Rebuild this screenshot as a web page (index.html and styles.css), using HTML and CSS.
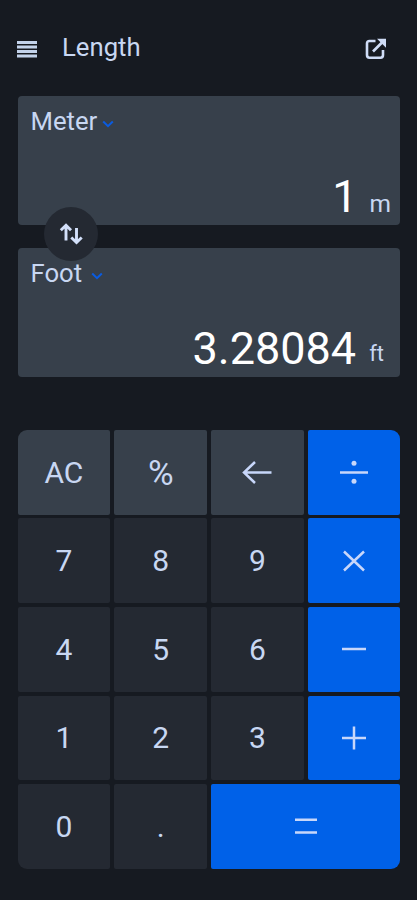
FILE: index.html
```html
<!DOCTYPE html>
<html lang="en">
<head>
  <meta charset="UTF-8">
  <meta name="viewport" content="width=device-width, initial-scale=1.0">
  <title>Length</title>
  <link rel="stylesheet" href="styles.css">
</head>
<body>
  <header class="topbar">
    <svg class="menu-icon" width="20" height="17" viewBox="0 0 20 17">
      <path d="M0 1.500H20M0 6H20M0 10.500H20M0 15H20" stroke="#c3d3eb" stroke-width="3"/>
    </svg>
    <h1>Length</h1>
    <svg class="open-icon" width="22" height="22" viewBox="0 0 22 22" fill="none" stroke="#cfdcf6" stroke-width="2.600">
      <path d="M10.500 3H4.500Q2 3 2 5.500V17Q2 19.700 4.500 19.700H15.500Q18 19.700 18 17V12"/>
      <path d="M8 13.500L17.500 4"/>
      <path d="M12 0.800H21V9.800Z" fill="#cfdcf6" stroke="none"/>
    </svg>
  </header>

  <main>
    <section class="converter">
      <div class="unit-card">
        <div class="unit-name">Meter
          <svg width="12" height="8" viewBox="0 0 12 8"><path d="M1.200 1.500L6 6.200L10.800 1.500"/></svg>
        </div>
        <div class="unit-value"><span class="number">1</span><span class="symbol">m</span></div>
      </div>

      <button class="swap">
        <svg width="24" height="22" viewBox="0 0 24 22" fill="none" stroke="#d3e0fa" stroke-width="2.900">
          <path d="M7 17.500V3M1.800 7.200L7 2.300L12 7.200"/>
          <path d="M17.500 5V19M12.300 14.500L17.500 19.500L22.700 14.500"/>
        </svg>
      </button>

      <div class="unit-card foot">
        <div class="unit-name">Foot
          <svg width="12" height="8" viewBox="0 0 12 8"><path d="M1.200 1.500L6 6.200L10.800 1.500"/></svg>
        </div>
        <div class="unit-value"><span class="number">3.28084</span><span class="symbol">ft</span></div>
      </div>
    </section>

    <section class="keypad">
      <button class="key function">AC</button>
      <button class="key function percent">%</button>
      <button class="key function">
        <svg width="30" height="24" viewBox="0 0 30 24"><path d="M29.500 12.500H2M13 2L2 12.500L13 23"/></svg>
      </button>
      <button class="key operator">
        <svg width="30" height="24" viewBox="0 0 30 24"><path d="M1 12.500H29"/><circle cx="15" cy="3.200" r="2.500"/><circle cx="15" cy="21.200" r="2.500"/></svg>
      </button>

      <button class="key">7</button>
      <button class="key">8</button>
      <button class="key">9</button>
      <button class="key operator times">
        <svg width="22" height="22" viewBox="0 0 22 22"><path d="M1 1.500L21 20.500M21 1.500L1 20.500"/></svg>
      </button>

      <button class="key">4</button>
      <button class="key">5</button>
      <button class="key">6</button>
      <button class="key operator">
        <svg width="24" height="24" viewBox="0 0 24 24"><path d="M0 12H24"/></svg>
      </button>

      <button class="key">1</button>
      <button class="key">2</button>
      <button class="key">3</button>
      <button class="key operator">
        <svg width="24" height="24" viewBox="0 0 24 24"><path d="M0 12H24M12 0.500V23.500"/></svg>
      </button>

      <button class="key">0</button>
      <button class="key">.</button>
      <button class="key operator equals">
        <svg width="22" height="20" viewBox="0 0 22 20"><path d="M0 2.800H22M0 15.500H22"/></svg>
      </button>
    </section>
  </main>
</body>
</html>
```
FILE: styles.css
```css
* {
  box-sizing: border-box;
}

body {
  margin: 0;
  height: 900px;
  background-color: #161a21;
  color: #c8d7f2;
  font-family: Roboto, sans-serif;
  overflow: hidden;
}

svg {
  display: block;
}

button {
  border: none;
  padding: 0;
  color: inherit;
  font-family: inherit;
}

/* Top bar */
.topbar {
  display: flex;
  align-items: center;
  height: 96px;
  padding: 0 30px 0 17px;
}

h1 {
  margin: 0 auto 2px 25px;
  font-size: 25.700px;
  line-height: 30px;
  font-weight: 400;
}

.menu-icon {
  margin-top: 3px;
}

.open-icon {
  margin-top: 2px;
}

/* Unit cards */
main {
  padding: 0 17px 0 17.500px;
}

.converter {
  position: relative;
  display: flex;
  flex-direction: column;
  gap: 23.500px;
}

.unit-card {
  display: flex;
  flex-direction: column;
  justify-content: space-between;
  height: 128.500px;
  padding: 10.400px 9px 1px 13px;
  border-radius: 4px;
  background-color: #37404b;
}

.unit-name {
  display: flex;
  align-items: center;
  gap: 5px;
  font-size: 25.700px;
  line-height: 31px;
}

.unit-name svg {
  margin-top: 4px;
  fill: none;
  stroke: #0a5be0;
  stroke-width: 2;
}

.foot .unit-name {
  gap: 9px;
}

.unit-value {
  display: flex;
  justify-content: flex-end;
  align-items: baseline;
  gap: 12px;
}

.number {
  color: #fff;
  font-size: 45px;
  line-height: 54px;
}

.symbol {
  font-size: 24.500px;
}

.foot .unit-value {
  padding-right: 7px;
  gap: 13px;
}

.foot .symbol {
  position: relative;
  top: -3px;
  font-size: 22px;
}

/* Swap button sits over both cards */
.swap {
  position: absolute;
  left: 26.500px;
  top: 111px;
  display: flex;
  align-items: center;
  justify-content: center;
  width: 54px;
  height: 54px;
  border-radius: 50%;
  background-color: #242932;
}

/* Keypad */
.keypad {
  display: grid;
  grid-template-columns: 92.800px 92.800px 92.800px 1fr;
  grid-auto-rows: 84.800px;
  gap: 3.800px 4px;
  margin-top: 53.300px;
  border-radius: 9px;
  overflow: hidden;
}

.key {
  display: flex;
  align-items: center;
  justify-content: center;
  border-radius: 2px;
  background-color: #242932;
  font-size: 30px;
}

.key svg {
  fill: none;
  stroke: #c8d7fa;
  stroke-width: 2.500;
}

.key circle {
  fill: #c8d7fa;
  stroke: none;
}

.function {
  background-color: #37404b;
}

.percent {
  padding-top: 2px;
  font-size: 35px;
}

.operator {
  background-color: #0061e8;
}

.equals {
  grid-column: span 2;
}
```
